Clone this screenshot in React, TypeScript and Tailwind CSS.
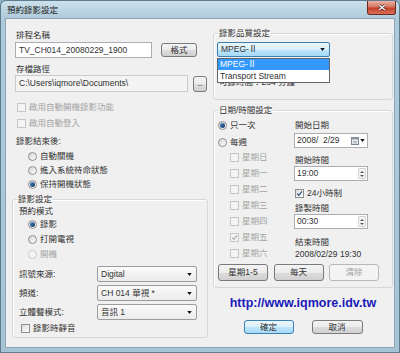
import { clsx } from "clsx";
import type { ReactNode } from "react";

const ink = "text-[#303030]";
const dim = "text-[#a2a2a2]";

function Tick({ color }: { color: string }) {
  return (
    <svg viewBox="0 0 9 9" className="h-[7px] w-[7px]">
      <path d="M1.5 4.6 L3.7 6.9 L7.7 1.8" fill="none" stroke={color} strokeWidth="1.5" />
    </svg>
  );
}

function CheckBox({ label, checked, disabled }: { label: string; checked?: boolean; disabled?: boolean }) {
  return (
    <div className="flex h-full items-center gap-[3px]">
      <span
        className={clsx(
          "flex h-[9px] w-[9px] shrink-0 items-center justify-center border",
          disabled ? "border-[#c3c6c8] bg-[#f4f4f4]" : "border-[#8e8f8f] bg-linear-to-br from-[#dadada] to-white"
        )}
      >
        {checked && <Tick color={disabled ? "#a8a8a8" : "#2b4a7a"} />}
      </span>
      <span className={disabled ? dim : ink}>{label}</span>
    </div>
  );
}

function Radio({ label, on, disabled }: { label: string; on?: boolean; disabled?: boolean }) {
  return (
    <div className="flex h-full items-center gap-[3px]">
      <span
        className={clsx(
          "flex h-[9px] w-[9px] shrink-0 items-center justify-center rounded-full border",
          disabled ? "border-[#c8cacc] bg-[#f4f4f4]" : "border-[#8e8f8f] bg-linear-to-br from-[#d4d4d4] to-white"
        )}
      >
        {on && <span className="h-[5px] w-[5px] rounded-full bg-linear-to-br from-[#4b8ed0] to-[#15305a]" />}
      </span>
      <span className={disabled ? dim : ink}>{label}</span>
    </div>
  );
}

function Btn({ children, className, primary, disabled }: { children: ReactNode; className?: string; primary?: boolean; disabled?: boolean }) {
  return (
    <div
      className={clsx(
        "flex items-center justify-center rounded-[3px] border",
        primary
          ? "border-[#3c7fb1] bg-[linear-gradient(#eaf6fd,#d9f0fc_50%,#bee6fd_50%,#a7d9f5)] text-[#303030]"
          : disabled
            ? "border-[#b5b9bc] bg-[#f4f4f4] text-[#a2a2a2]"
            : "border-[#7a7a7a] bg-[linear-gradient(#f4f4f4,#ebebeb_50%,#dddddd_50%,#d0d0d0)] text-[#303030]",
        className
      )}
    >
      {children}
    </div>
  );
}

function Caret() {
  return (
    <svg viewBox="0 0 6 4" className="h-[3px] w-[5px] shrink-0">
      <path d="M0 0 H6 L3 4 Z" fill="#111" />
    </svg>
  );
}

function Combo({ text }: { text: string }) {
  return (
    <div className="flex h-full w-[100px] items-center rounded-[2px] border border-[#9c9c9c] bg-linear-to-b from-[#fbfbfb] to-[#ebebeb] pl-[3px] pr-[4px]">
      <span className={clsx("flex-1", ink)}>{text}</span>
      <Caret />
    </div>
  );
}

function Spin() {
  return (
    <div className="flex h-[11px] w-[8px] flex-col items-center justify-center gap-[2px] rounded-[1px] border border-[#d0d0d0] bg-[#f4f4f4]">
      <svg viewBox="0 0 4 2" className="h-[2px] w-[4px]">
        <path d="M0 2 H4 L2 0 Z" fill="#555" />
      </svg>
      <svg viewBox="0 0 4 2" className="h-[2px] w-[4px]">
        <path d="M0 0 H4 L2 2 Z" fill="#555" />
      </svg>
    </div>
  );
}

function TimeBox({ text }: { text: string }) {
  return (
    <div className="flex h-[15px] w-[74px] items-center border border-[#abadb3] bg-white pl-[2px] pr-[1px]">
      <span className={clsx("flex-1", ink)}>{text}</span>
      <Spin />
    </div>
  );
}

function Group({ title, className, children }: { title: string; className?: string; children: ReactNode }) {
  return (
    <fieldset className={clsx("rounded-[3px] border border-[#d2d9de] shadow-[inset_1px_1px_0_#ffffff]", className)}>
      <legend className={clsx("ml-[4px] h-[12px] px-[1px] leading-[12px]", ink)}>{title}</legend>
      {children}
    </fieldset>
  );
}

export default function App() {
  return (
    <div className="h-[353px] w-[400px] overflow-hidden bg-[#8fb0c3]">
      <div className="flex h-[353px] w-[400px] flex-col rounded-t-[6px] border border-[#5d7b8d] bg-[linear-gradient(#cbe0eb,#afcbdb_17px,#a6c4d6)] font-['Liberation_Sans','Noto_Sans_CJK_TC',sans-serif] text-[8.5px] leading-none">
        {/* title bar */}
        <div className="flex h-[17px] items-start">
          <span className="mt-[5px] ml-[6px] flex-1 text-[#1a1a1a]">預約錄影設定</span>
          <div className="mr-[3px] flex h-[14px] w-[29px] items-center justify-center rounded-b-[3px] border border-t-0 border-[#6b2a20] bg-[linear-gradient(#eab3a6,#d77560_45%,#c2412a_55%,#d9705a)]">
            <svg viewBox="0 0 8 7" className="h-[7px] w-[8px]">
              <path d="M1 1 L7 6 M7 1 L1 6" stroke="#3a1510" strokeWidth="2.4" />
              <path d="M1 1 L7 6 M7 1 L1 6" stroke="#ffffff" strokeWidth="1.4" />
            </svg>
          </div>
        </div>

        {/* client area */}
        <div className="mx-[4px] mb-[4px] flex flex-1 border border-[#8aa5b6] bg-[#f0f0f0]">
          {/* left column */}
          <div className="ml-[9px] flex w-[193px] flex-col">
            <div className={clsx("mt-[10px] flex h-[12px] items-center pl-[1px]", ink)}>排程名稱</div>
            <div className="mt-[1px] flex h-[16px] items-center">
              <div className={clsx("flex h-full w-[137px] items-center border border-[#abadb3] bg-white pl-[3px]", ink)}>
                TV_CH014_20080229_1900
              </div>
              <Btn className="ml-[9px] h-[14px] w-[36px]">格式</Btn>
            </div>
            <div className={clsx("mt-[5px] flex h-[12px] items-center pl-[1px]", ink)}>存檔路徑</div>
            <div className="flex h-[17px] items-center">
              <div className={clsx("flex h-full w-[173px] items-center border border-[#c9cbcf] bg-[#f4f4f4] pl-[3px]", ink)}>
                C:\Users\iqmore\Documents\
              </div>
              <Btn className="ml-[5px] h-[16px] w-[14px] items-end pb-[3px]">..</Btn>
            </div>
            <div className="mt-[7px] h-[16px] pl-[2px]">
              <CheckBox label="啟用自動開機錄影功能" disabled />
            </div>
            <div className="h-[16px] pl-[2px]">
              <CheckBox label="啟用自動登入" disabled />
            </div>
            <div className={clsx("mt-[3px] flex h-[15px] items-center pl-[1px]", ink)}>錄影結束後:</div>
            <div className="h-[14px] pl-[13px]">
              <Radio label="自動關機" />
            </div>
            <div className="h-[14px] pl-[13px]">
              <Radio label="進入系統待命狀態" />
            </div>
            <div className="h-[14px] pl-[13px]">
              <Radio label="保持開機狀態" on />
            </div>

            <Group title="錄影設定" className="mt-[2px] -ml-[3px] w-[196px]">
              <div className="flex flex-col pr-[10px] pb-[2px] pl-[6px]">
                <div className={clsx("flex h-[12px] items-center", ink)}>預約模式</div>
                <div className="h-[15px] pl-[9px]">
                  <Radio label="錄影" on />
                </div>
                <div className="h-[15px] pl-[9px]">
                  <Radio label="打開電視" />
                </div>
                <div className="h-[15px] pl-[9px]">
                  <Radio label="開機" disabled />
                </div>
                <div className="mt-[4px] flex h-[16px] items-center justify-between">
                  <span className={ink}>訊號來源:</span>
                  <Combo text="Digital" />
                </div>
                <div className="mt-[3px] flex h-[16px] items-center justify-between">
                  <span className={ink}>頻道:</span>
                  <Combo text="CH 014  華視 *" />
                </div>
                <div className="mt-[3px] flex h-[16px] items-center justify-between">
                  <span className={ink}>立體聲模式:</span>
                  <Combo text="音訊 1" />
                </div>
                <div className="mt-[1px] h-[14px] pl-[2px]">
                  <CheckBox label="錄影時靜音" />
                </div>
              </div>
            </Group>
          </div>

          {/* right column */}
          <div className="ml-[5px] flex w-[180px] flex-col">
            <Group title="錄影品質設定" className="mt-[8px]">
              <div className="flex flex-col pb-[11px] pl-[3px]">
                <div className="relative mt-[3px] h-[15px] w-[113px]">
                  <div className="flex h-full items-center rounded-[2px] border border-[#3c7fb1] bg-[linear-gradient(#eaf6fd,#d9f0fc_50%,#bee6fd_50%,#a7d9f5)] pr-[4px] pl-[3px]">
                    <span className={clsx("flex-1", ink)}>MPEG-Ⅱ</span>
                    <Caret />
                  </div>
                  <div className="absolute top-[16px] left-0 z-10 w-[113px] border border-[#646464] bg-white">
                    <div className="flex h-[11px] items-center bg-[#3399ff] pl-[2px] text-white">MPEG-Ⅱ</div>
                    <div className={clsx("flex h-[12px] items-center pl-[2px]", ink)}>Transport Stream</div>
                  </div>
                </div>
                <div className={clsx("mt-[19px] flex h-[12px] items-center pl-[2px]", ink)}>可錄時間：234 分鐘</div>
              </div>
            </Group>

            <Group title="日期/時間設定" className="mt-[4px]">
              <div className="flex flex-col pb-[6px] pl-[4px]">
                <div className="flex">
                  <div className="flex w-[76px] flex-col">
                    <div className="mt-[2px] h-[14px]">
                      <Radio label="只一次" on />
                    </div>
                    <div className="mt-[3px] h-[14px]">
                      <Radio label="每週" />
                    </div>
                    {["星期日", "星期一", "星期二", "星期三", "星期四", "星期五", "星期六"].map((d) => (
                      <div key={d} className="h-[16px] pl-[12px]">
                        <CheckBox label={d} disabled checked={d === "星期五"} />
                      </div>
                    ))}
                  </div>
                  <div className="flex flex-col">
                    <div className={clsx("mt-[3px] flex h-[12px] items-center pl-[1px]", ink)}>開始日期</div>
                    <div className="mt-[2px] flex h-[15px] w-[74px] items-center border border-[#abadb3] bg-white pr-[2px] pl-[2px]">
                      <span className={clsx("flex-1 whitespace-pre", ink)}>2008/  2/29</span>
                      <svg viewBox="0 0 8 8" className="h-[8px] w-[8px]">
                        <rect x="0.5" y="0.5" width="7" height="7" fill="#e8ecf0" stroke="#7d8790" />
                        <rect x="0.5" y="0.5" width="7" height="2" fill="#8b98a5" />
                        <path d="M2 4.5 H6 M2 6 H6" stroke="#9aa4ad" strokeWidth="0.8" />
                      </svg>
                      <span className="ml-[1px]">
                        <Caret />
                      </span>
                    </div>
                    <div className={clsx("mt-[6px] flex h-[12px] items-center pl-[1px]", ink)}>開始時間</div>
                    <TimeBox text="19:00" />
                    <div className="mt-[5px] h-[14px] pl-[1px]">
                      <CheckBox label="24小時制" checked />
                    </div>
                    <div className={clsx("mt-[2px] flex h-[12px] items-center pl-[1px]", ink)}>錄製時間</div>
                    <TimeBox text="00:30" />
                    <div className={clsx("mt-[7px] flex h-[12px] items-center pl-[1px]", ink)}>結束時間</div>
                    <div className={clsx("flex h-[12px] items-center pl-[1px]", ink)}>2008/02/29 19:30</div>
                  </div>
                </div>
                <div className="mt-[3px] flex h-[17px] gap-[5.5px]">
                  <Btn className="h-full w-[50px]">星期1-5</Btn>
                  <Btn className="h-full w-[50px]">每天</Btn>
                  <Btn className="h-full w-[50px]" disabled>清除</Btn>
                </div>
              </div>
            </Group>

            <div className="mt-[9px] flex h-[13px] items-center justify-center text-[12.5px] font-bold text-[#1a1ab8]">
              http://www.iqmore.idv.tw
            </div>
            <div className="mt-[10px] flex h-[14px] justify-center gap-[18px]">
              <Btn className="h-full w-[50px]" primary>確定</Btn>
              <Btn className="h-full w-[51px]">取消</Btn>
            </div>
          </div>
        </div>
      </div>
    </div>
  );
}
